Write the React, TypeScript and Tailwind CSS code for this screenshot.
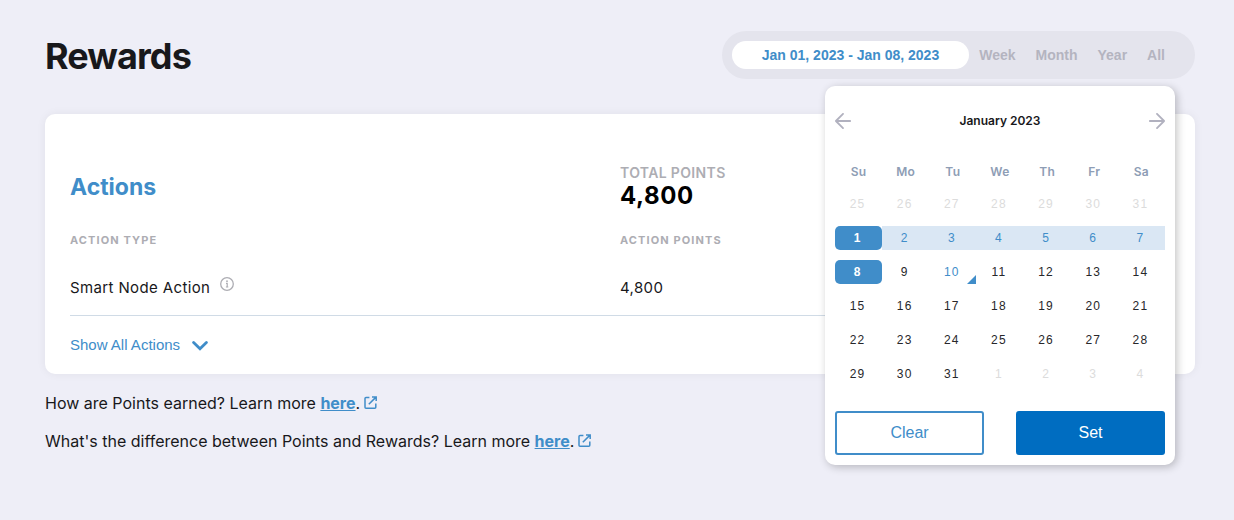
import { type FC } from 'react';
import clsx from 'clsx';

type DayKind = 'outside' | 'edge' | 'range' | 'today' | 'normal';

const RANGES = ['Week', 'Month', 'Year', 'All'];
const WEEKDAYS = ['Su', 'Mo', 'Tu', 'We', 'Th', 'Fr', 'Sa'];

const WEEKS = [
  [25, 26, 27, 28, 29, 30, 31],
  [1, 2, 3, 4, 5, 6, 7],
  [8, 9, 10, 11, 12, 13, 14],
  [15, 16, 17, 18, 19, 20, 21],
  [22, 23, 24, 25, 26, 27, 28],
  [29, 30, 31, 1, 2, 3, 4],
];

const dayKind = (day: number, week: number): DayKind => {
  if ((week === 0 && day > 7) || (week === 5 && day < 7)) return 'outside';
  if (day === 1 || day === 8) return 'edge';
  if (day < 8) return 'range';
  if (day === 10) return 'today';
  return 'normal';
};

const ArrowIcon: FC<{ flip?: boolean }> = ({ flip }) => (
  <svg width="16" height="16" viewBox="0 0 16 16" fill="none" stroke="#b1b1bf" strokeWidth="1.8" strokeLinecap="round" strokeLinejoin="round" className={clsx('block', flip && 'rotate-180')}>
    <path d="M15.2 8H.9M8 .9.9 8 8 15.1" />
  </svg>
);

const InfoIcon: FC = () => (
  <svg width="14" height="14" viewBox="0 0 14 14" fill="none" className="block">
    <circle cx="7" cy="7" r="6.3" stroke="#adadb3" strokeWidth="1.3" />
    <path d="M6 6.4h1.2v3.7M5.9 10h2.4" stroke="#adadb3" strokeWidth="1.2" />
    <circle cx="7" cy="4.2" r=".9" fill="#adadb3" />
  </svg>
);

const ExternalIcon: FC = () => (
  <svg width="13" height="13" viewBox="0 0 13 13" fill="none" stroke="#408dc9" strokeWidth="1.5" className="ml-1 inline-block align-baseline">
    <path d="M5.4 1.4H2a1 1 0 0 0-1 1v8.8a1 1 0 0 0 1 1h8.8a1 1 0 0 0 1-1V7.6M8 .9h4.2v4.2M12 1.1 4.8 8.3" />
  </svg>
);

const Calendar: FC = () => (
  <div className="absolute top-[55px] right-5 z-10 w-[350px] rounded-[10px] bg-white px-[10px] pb-[10px] shadow-[2px_2px_8px_rgba(0,0,0,0.24)]">
    <div className="flex h-[70px] items-center justify-between">
      <button type="button" aria-label="Previous month"><ArrowIcon /></button>
      <span className="text-xs font-semibold text-[#18181b]">January 2023</span>
      <button type="button" aria-label="Next month"><ArrowIcon flip /></button>
    </div>
    <table className="w-full table-fixed border-collapse text-center text-xs">
      <thead>
        <tr className="h-[31px] text-[#8e9db5]">
          {WEEKDAYS.map(d => <th key={d} scope="col" className="p-0 font-semibold tracking-wide">{d}</th>)}
        </tr>
      </thead>
      <tbody className="font-['Liberation_Sans',sans-serif]">
        {WEEKS.map((days, w) => (
          <tr key={w} className="h-[34px]">
            {days.map(day => {
              const kind = dayKind(day, w);
              return (
                <td key={day} className="p-0">
                  <button
                    type="button"
                    className={clsx(
                      'relative block h-6 w-full pr-[2px] tracking-widest',
                      kind === 'outside' && 'text-[#dcdcdc]',
                      kind === 'edge' && 'rounded-[5px] bg-[#408dc9] font-bold text-white',
                      kind === 'range' && 'bg-[#dae7f4] text-[#408dc9]',
                      kind === 'today' && 'text-[#408dc9]',
                      kind === 'normal' && 'text-[#27272a]',
                    )}
                  >
                    {day}
                    {kind === 'today' && (
                      <svg width="9" height="9" viewBox="0 0 9 9" className="absolute right-0 bottom-0">
                        <path d="M9 0v9H0z" fill="#408dc9" />
                      </svg>
                    )}
                  </button>
                </td>
              );
            })}
          </tr>
        ))}
      </tbody>
    </table>
    <div className="mt-5 grid grid-cols-2 gap-8 font-['Liberation_Sans',sans-serif] text-base">
      <button type="button" className="h-11 rounded-[3px] border-2 border-[#408dc9] text-[#408dc9]">Clear</button>
      <button type="button" className="h-11 rounded-[3px] bg-[#006dc1] text-white">Set</button>
    </div>
  </div>
);

export default function App() {
  return (
    <main className="min-h-screen bg-[#eeeef7] pt-[31px] pr-[39px] pl-[45px] font-['Inter',sans-serif] text-[#18181b]">
      <header className="flex items-center justify-between">
        <h1 className="pt-[2px] text-4xl font-bold tracking-tight">Rewards</h1>
        <div className="relative">
          <div className="flex h-12 items-center gap-5 rounded-full bg-[#e4e4ed] pr-[30px] pl-[10px] font-['Liberation_Sans',sans-serif] text-sm font-bold text-[#b4b4c0]">
            <button type="button" className="-mr-[10px] h-7 rounded-full bg-white px-[30px] text-[#408dc9]">Jan 01, 2023 - Jan 08, 2023</button>
            {RANGES.map(r => <button key={r} type="button">{r}</button>)}
          </div>
          <Calendar />
        </div>
      </header>

      <section className="mt-[35px] rounded-[10px] bg-white px-[25px] pt-[50px] pb-[14px] shadow-[0_0_10px_rgba(0,0,0,0.06)]">
        <div className="grid grid-cols-2 items-center">
          <h2 className="text-[23px] leading-8 font-bold text-[#408dc9]">Actions</h2>
          <div>
            <div className="text-sm leading-[18px] font-semibold tracking-wide text-[#adadb3]">TOTAL POINTS</div>
            <div className="text-2xl leading-7 font-bold tracking-wide text-black">4,800</div>
          </div>
        </div>
        <table className="mt-3 w-full table-fixed border-collapse text-left">
          <thead>
            <tr className="h-9 text-[11px] tracking-widest text-[#adadb3]">
              <th scope="col" className="p-0 font-bold">ACTION TYPE</th>
              <th scope="col" className="p-0 font-bold">ACTION POINTS</th>
            </tr>
          </thead>
          <tbody>
            <tr className="h-[57px] border-b border-[#d0dbe6] text-[15px] tracking-wide">
              <td className="p-0 pt-1">
                <div className="flex items-center gap-[10px]">
                  Smart Node Action
                  <button type="button" aria-label="About Smart Node Action" className="pb-2"><InfoIcon /></button>
                </div>
              </td>
              <td className="p-0 pt-1">4,800</td>
            </tr>
          </tbody>
        </table>
        <button type="button" className="mt-4 flex h-7 items-center gap-3 font-['Liberation_Sans',sans-serif] text-[15px] text-[#408dc9]">
          Show All Actions
          <svg width="16" height="10" viewBox="0 0 16 10" fill="none" stroke="#408dc9" strokeWidth="2.8" strokeLinecap="round">
            <path d="m1.6 1.5 6.4 6.3 6.4-6.3" />
          </svg>
        </button>
      </section>

      <div className="mt-[17px] space-y-[14px] text-base leading-6">
        <p>
          How are Points earned? Learn more <a href="#points" className="font-bold text-[#408dc9] underline">here</a>.
          <ExternalIcon />
        </p>
        <p>
          What's the difference between Points and Rewards? Learn more <a href="#rewards" className="font-bold text-[#408dc9] underline">here</a>.
          <ExternalIcon />
        </p>
      </div>
    </main>
  );
}
